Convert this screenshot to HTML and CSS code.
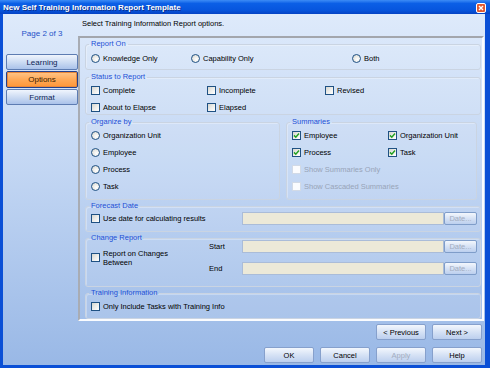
FILE: index.html
```html
<!DOCTYPE html>
<html>
<head>
<meta charset="utf-8">
<link rel="stylesheet" href="styles.css">
</head>
<body>
<div class="window">
  <div class="titlebar">
    <span class="title">New Self Training Information Report Template</span>
    <span class="close"><svg width="10" height="10" viewBox="0 0 10 10"><rect x="0.5" y="0.5" width="9" height="9" rx="1.5" fill="#e2582f" stroke="#fff" stroke-width="1"/><path d="M3 3L7 7M7 3L3 7" stroke="#fff" stroke-width="1.4"/></svg></span>
  </div>
  <div class="client">
    <div class="instr">Select Training Information Report options.</div>
    <aside class="side">
      <div class="page">Page 2 of 3</div>
      <nav class="tabs">
        <div class="tab">Learning</div>
        <div class="tab active">Options</div>
        <div class="tab">Format</div>
      </nav>
    </aside>
    <main class="panel">
      <fieldset class="grp g-report">
        <legend>Report On</legend>
        <div class="cols-report">
          <label class="opt"><span class="radio"></span>Knowledge Only</label>
          <label class="opt"><span class="radio"></span>Capability Only</label>
          <label class="opt"><span class="radio"></span>Both</label>
        </div>
      </fieldset>
      <fieldset class="grp g-status">
        <legend>Status to Report</legend>
        <div class="cols-status">
          <label class="opt"><span class="chk"></span>Complete</label>
          <label class="opt"><span class="chk"></span>Incomplete</label>
          <label class="opt"><span class="chk"></span>Revised</label>
          <label class="opt"><span class="chk"></span>About to Elapse</label>
          <label class="opt"><span class="chk"></span>Elapsed</label>
        </div>
      </fieldset>
      <div class="pair">
        <fieldset class="grp g-org">
          <legend>Organize by</legend>
          <div class="list">
            <label class="opt"><span class="radio"></span>Organization Unit</label>
            <label class="opt"><span class="radio"></span>Employee</label>
            <label class="opt"><span class="radio"></span>Process</label>
            <label class="opt"><span class="radio"></span>Task</label>
          </div>
        </fieldset>
        <fieldset class="grp g-sum">
          <legend>Summaries</legend>
          <div class="cols-sum">
            <label class="opt"><span class="chk on"><svg width="7" height="7" viewBox="0 0 7 7"><path d="M1 3.4L2.8 5.2L6 1.6" fill="none" stroke="#22a022" stroke-width="1.5"/></svg></span>Employee</label>
            <label class="opt"><span class="chk on"><svg width="7" height="7" viewBox="0 0 7 7"><path d="M1 3.4L2.8 5.2L6 1.6" fill="none" stroke="#22a022" stroke-width="1.5"/></svg></span>Organization Unit</label>
            <label class="opt"><span class="chk on"><svg width="7" height="7" viewBox="0 0 7 7"><path d="M1 3.4L2.8 5.2L6 1.6" fill="none" stroke="#22a022" stroke-width="1.5"/></svg></span>Process</label>
            <label class="opt"><span class="chk on"><svg width="7" height="7" viewBox="0 0 7 7"><path d="M1 3.4L2.8 5.2L6 1.6" fill="none" stroke="#22a022" stroke-width="1.5"/></svg></span>Task</label>
            <label class="opt span2 dis"><span class="chk"></span>Show Summaries Only</label>
            <label class="opt span2 dis"><span class="chk"></span>Show Cascaded Summaries</label>
          </div>
        </fieldset>
      </div>
      <fieldset class="grp g-fore">
        <legend>Forecast Date</legend>
        <div class="cols-fore">
          <label class="opt"><span class="chk"></span>Use date for calculating results</label>
          <span class="field"></span>
          <span class="btn small dis">Date...</span>
        </div>
      </fieldset>
      <fieldset class="grp g-change">
        <legend>Change Report</legend>
        <div class="cols-change">
          <label class="opt two"><span class="chk"></span><span>Report on Changes<br>Between</span></label>
          <span class="lbl">Start</span>
          <span class="field"></span>
          <span class="btn small dis">Date...</span>
          <span class="lbl">End</span>
          <span class="field"></span>
          <span class="btn small dis">Date...</span>
        </div>
      </fieldset>
      <fieldset class="grp g-train">
        <legend>Training Information</legend>
        <label class="opt"><span class="chk"></span>Only Include Tasks with Training Info</label>
      </fieldset>
    </main>
    <div class="nav">
      <span class="btn">&lt; Previous</span>
      <span class="btn">Next &gt;</span>
    </div>
    <div class="actions">
      <span class="btn">OK</span>
      <span class="btn">Cancel</span>
      <span class="btn dis">Apply</span>
      <span class="btn">Help</span>
    </div>
  </div>
</div>
</body>
</html>
```
FILE: styles.css
```css
html, body {
  margin: 0;
  padding: 0;
}
body {
  font-family: "Liberation Sans", Arial, sans-serif;
  font-size: 7.5px;
  color: #000;
}
.window {
  width: 490px;
  height: 368px;
  display: flex;
  flex-direction: column;
  background: #0a4fd6;
}
.titlebar {
  height: 14px;
  flex: none;
  display: flex;
  align-items: center;
  justify-content: space-between;
  padding: 0 4px 0 3px;
  background: linear-gradient(#3d8cf6 0%, #0b5fe6 25%, #0756de 70%, #0442c4 100%);
  color: #fff;
}
.title {
  font-weight: bold;
  font-size: 8px;
  text-shadow: 1px 1px 0 #0a2f8c;
}
.close {
  display: flex;
  margin-top: 1px;
}
.client {
  flex: 1;
  margin: 0 5px 3px 3px;
  background: linear-gradient(#deeafb 0%, #c2d6f3 45%, #99b8e6 100%);
  display: grid;
  grid-template-columns: 75px 406px 1fr;
  grid-template-rows: 22px 285px 19px 23px;
  grid-template-areas:
    "side instr instr"
    "side panel ."
    "nav nav nav"
    "act act act";
}
.instr {
  grid-area: instr;
  padding-left: 4px;
  line-height: 20px;
}
.side {
  grid-area: side;
  padding: 15px 0 0 3px;
}
.page {
  width: 72px;
  text-align: center;
  line-height: 10px;
  color: #2451c8;
  font-size: 8px;
}
.tabs {
  margin-top: 15px;
  display: flex;
  flex-direction: column;
  gap: 1px;
}
.tab {
  width: 72px;
  height: 16px;
  box-sizing: border-box;
  border: 1px solid #5d7cb2;
  border-radius: 2px;
  background: linear-gradient(#f0f5fd, #c6d7f1 60%, #aac2ea);
  display: flex;
  align-items: center;
  justify-content: center;
  color: #0c1f56;
  font-size: 8px;
}
.tab.active {
  height: 17px;
  border: 1px solid #23408c;
  box-shadow: inset 0 0 0 1px #e8883a;
  background: linear-gradient(#ffc68a, #ffa754 55%, #ff9638);
  color: #3a1c00;
}
.panel {
  grid-area: panel;
  box-sizing: border-box;
  border: 2px solid;
  border-color: #a3a6ad #fafcff #fafcff #a8acb4;
  padding: 1px 1px 0 5px;
}
.grp {
  margin: 0;
  min-width: 0;
  border: 1px solid #cad4e2;
  border-radius: 3px;
  padding: 0 5px;
  background: rgba(255, 255, 255, 0.08);
  box-shadow: inset 1px 1px 0 rgba(255, 255, 255, 0.3);
}
.grp legend {
  padding: 0 2px;
  margin-left: -2px;
  line-height: 10px;
  color: #1c4fd6;
}
.opt {
  display: flex;
  align-items: center;
  gap: 3px;
  height: 10px;
  white-space: nowrap;
}
.opt.dis {
  color: #98a4b8;
}
.radio {
  width: 9px;
  height: 9px;
  box-sizing: border-box;
  border: 1px solid #1f5183;
  border-radius: 50%;
  background: radial-gradient(circle at 65% 65%, #fff 0%, #eeeeea 45%, #d0d0c8 100%);
  flex: none;
}
.chk {
  width: 9px;
  height: 9px;
  box-sizing: border-box;
  border: 1px solid #1f5183;
  background: linear-gradient(135deg, #d6d6cf 0%, #ededea 50%, #fff 100%);
  flex: none;
  display: flex;
  align-items: center;
  justify-content: center;
}
.dis .chk {
  border-color: #d2dae6;
  background: #fbfcfe;
}
.g-report {
  padding-top: 4px;
  padding-bottom: 6px;
}
.cols-report {
  display: grid;
  grid-template-columns: 100px 161px auto;
}
.g-status {
  margin-top: 2px;
  padding-top: 3px;
  padding-bottom: 2px;
}
.cols-status {
  display: grid;
  grid-template-columns: 116px 118px auto;
  row-gap: 7px;
}
.pair {
  margin-top: 2px;
  display: grid;
  grid-template-columns: 195px 191px;
  column-gap: 6px;
}
.g-org, .g-sum {
  padding-top: 3px;
  padding-bottom: 8px;
}
.list {
  display: flex;
  flex-direction: column;
  gap: 7px;
}
.cols-sum {
  display: grid;
  grid-template-columns: 96px auto;
  row-gap: 7px;
}
.span2 {
  grid-column: 1 / -1;
}
.g-fore {
  margin-top: 1px;
  padding-top: 1px;
  padding-bottom: 6px;
}
.cols-fore {
  display: grid;
  grid-template-columns: 151px 202px 33px;
  grid-template-rows: 13px;
  align-items: center;
}
.field {
  height: 13px;
  box-sizing: border-box;
  background: #ece9d8;
  border: 1px solid #aabcd8;
}
.btn {
  width: 50px;
  height: 16px;
  box-sizing: border-box;
  border: 1px solid #86a0cc;
  border-radius: 2px;
  background: linear-gradient(#f3f7fd, #d6e2f5 50%, #bccfee);
  display: flex;
  align-items: center;
  justify-content: center;
  color: #000;
}
.btn.dis {
  color: #a2acc0;
}
.btn.small {
  width: 33px;
  height: 13px;
  border-color: #7f9dc9;
}
.g-change {
  margin-top: 1px;
  padding-top: 0;
  padding-bottom: 11px;
}
.cols-change {
  margin-top: -3px;
  display: grid;
  grid-template-columns: 118px 33px 202px 33px;
  grid-template-rows: 13px 13px;
  row-gap: 9px;
  align-items: center;
}
.opt.two {
  grid-row: 1 / 3;
  height: auto;
  line-height: 9px;
}
.lbl {
  line-height: 10px;
}
.g-train {
  margin-top: 1px;
  padding-top: 3px;
  padding-bottom: 7px;
}
.nav, .actions {
  display: flex;
  justify-content: flex-end;
  gap: 6px;
  padding-right: 3px;
}
.nav {
  grid-area: nav;
  padding-top: 3px;
}
.actions {
  grid-area: act;
  padding-top: 7px;
}
```
